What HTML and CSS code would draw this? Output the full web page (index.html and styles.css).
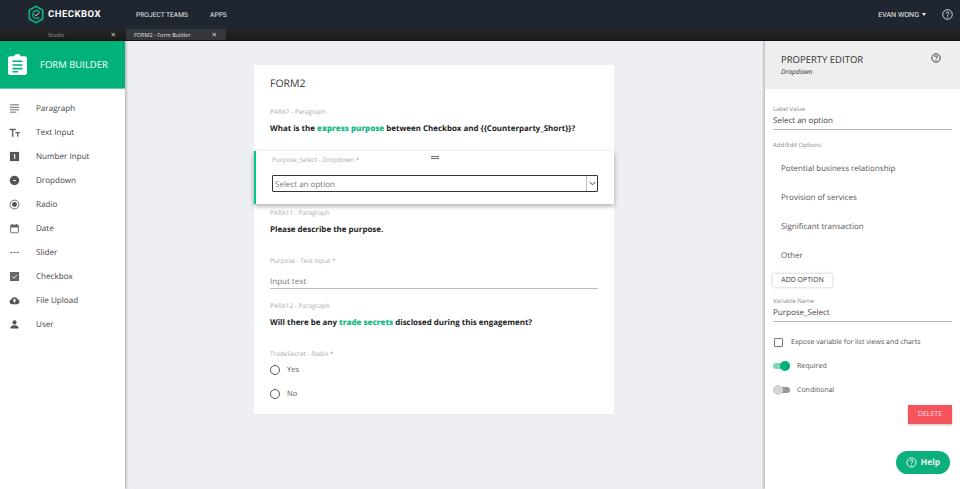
FILE: index.html
```html
<!DOCTYPE html>
<html lang="en">
<head>
<meta charset="utf-8">
<title>Checkbox Form Builder</title>
<link rel="stylesheet" href="styles.css">
</head>
<body>
<header class="topbar">
  <div class="logo">
    <svg class="logo-mark" width="16" height="19" viewBox="0 0 16 19"><path d="M8 1.200 14.700 5.100V13.900L8 17.800 1.300 13.900V5.100Z" fill="none" stroke="#0fa878" stroke-width="1.800"/><path d="M11.400 6.800A3.900 3.900 0 1 0 11.400 12.200" fill="none" stroke="#0fa878" stroke-width="1.600"/><path d="M6.600 9.300 8.100 10.700 11.600 7.600" fill="none" stroke="#d8efe6" stroke-width="1"/></svg>
    <span class="logo-text">CHECKBOX</span>
  </div>
  <nav class="topnav"><span>PROJECT TEAMS</span><span>APPS</span></nav>
  <div class="user">
    <span>EVAN WONG</span><i class="caret"></i>
    <svg class="help-top" width="11" height="11" viewBox="0 0 12 12"><circle cx="6" cy="6" r="5.200" fill="none" stroke="#fff" stroke-width=".9"/><path d="M4.500 4.800A1.500 1.500 0 1 1 6.700 6.100C6.200 6.400 6 6.600 6 7.300" fill="none" stroke="#fff" stroke-width=".9"/><circle cx="6" cy="8.800" r=".6" fill="#fff"/></svg>
  </div>
</header>
<div class="tabs">
  <div class="tab"><span class="tab-name">Studio</span><span class="tab-x">✕</span></div>
  <div class="tab active"><span class="tab-name">FORM2 - Form Builder</span><span class="tab-x">✕</span></div>
</div>
<div class="workspace">
  <aside class="sidebar">
    <div class="side-head">
      <svg width="19" height="21" viewBox="0 0 19 23" preserveAspectRatio="none"><path d="M2.200 2.500H6.200C6.400.9 7.800 0 9.500 0S12.600.9 12.800 2.500H16.800C18 2.500 19 3.500 19 4.700V20.800C19 22 18 23 16.800 23H2.200C1 23 0 22 0 20.800V4.700C0 3.500 1 2.500 2.200 2.500Z" fill="#fff"/><path d="M4.500 8H14.500M4.500 12H14.500M4.500 16H14.500M4.500 19.500H10" stroke="#00b27a" stroke-width="1.700"/></svg>
      <span>FORM BUILDER</span>
    </div>
    <ul class="side-list">
      <li><svg viewBox="0 0 12 12"><path d="M1 2H11M1 4.700H11M1 7.400H11M1 10H8" stroke="#666" stroke-width="1"/></svg>Paragraph</li>
      <li><svg viewBox="0 0 12 12"><path d="M.5 2H7.500V3.500H4.800V10.500H3.200V3.500H.5ZM7 5.500H12V6.800H10.200V10.500H8.800V6.800H7Z" fill="#666"/></svg>Text Input</li>
      <li><svg viewBox="0 0 12 12"><rect x="1" y="1" width="10" height="10" fill="#555"/><path d="M5.400 3.500H6.800V8.700H5.600V4.700H4.800V4Z" fill="#fff"/></svg>Number Input</li>
      <li><svg viewBox="0 0 12 12"><circle cx="6" cy="6" r="5.200" fill="#555"/><rect x="4.500" y="5.600" width="3" height="1" fill="#fff"/></svg>Dropdown</li>
      <li><svg viewBox="0 0 12 12"><circle cx="6" cy="6" r="4.800" fill="none" stroke="#666" stroke-width="1"/><circle cx="6" cy="6" r="2.700" fill="#555"/></svg>Radio</li>
      <li><svg viewBox="0 0 12 12"><rect x="1.800" y="2.300" width="8.400" height="8.400" rx=".8" fill="none" stroke="#666" stroke-width="1"/><path d="M1.800 2.300H10.200V5H1.800ZM3.200 1H4.300V2.500H3.200ZM7.700 1H8.800V2.500H7.700Z" fill="#666"/></svg>Date</li>
      <li><svg viewBox="0 0 12 12"><path d="M1.500 6H10.500" stroke="#888" stroke-width=".5"/><circle cx="2.200" cy="6" r=".9" fill="#666"/><circle cx="6" cy="6" r=".9" fill="#666"/><circle cx="9.800" cy="6" r=".9" fill="#666"/></svg>Slider</li>
      <li><svg viewBox="0 0 12 12"><rect x="1" y="1" width="10" height="10" rx=".5" fill="#666"/><path d="M3.400 6 5.300 7.900 8.700 4.200" fill="none" stroke="#fff" stroke-width="1"/></svg>Checkbox</li>
      <li><svg viewBox="0 0 12 12"><path d="M3 10A2.700 2.700 0 0 1 2.600 4.700 3.700 3.700 0 0 1 9.400 4.700 2.700 2.700 0 0 1 9.200 10Z" fill="#555"/><path d="M6 3.800 8 6.300H6.800V8.300H5.200V6.300H4Z" fill="#fff"/></svg>File Upload</li>
      <li><svg viewBox="0 0 12 12"><circle cx="6" cy="3.700" r="2.300" fill="#555"/><path d="M1.800 10.300V9C1.800 7.500 4.500 6.900 6 6.900S10.200 7.500 10.200 9V10.300Z" fill="#555"/></svg>User</li>
    </ul>
  </aside>
  <main class="canvas">
    <section class="card">
      <h1 class="form-title">FORM2</h1>
      <div class="block para-first">
        <div class="field-label">PARA7 - Paragraph</div>
        <p class="para">What is the <b class="accent">express purpose</b> between Checkbox and {{Counterparty_Short}}?</p>
      </div>
      <div class="selected">
        <div class="sel-label">Purpose_Select - Dropdown *</div>
        <i class="handle"></i>
        <div class="select-box"><span class="select-text">Select an option</span><span class="select-arrow"><svg width="7" height="5" viewBox="0 0 7 5"><path d="M.7 1 3.500 3.800 6.300 1" fill="none" stroke="#444" stroke-width="1"/></svg></span></div>
      </div>
      <div class="block para-after">
        <div class="field-label">PARA11 - Paragraph</div>
        <p class="para">Please describe the purpose.</p>
      </div>
      <div class="block text-block">
        <div class="field-label">Purpose - Text Input *</div>
        <div class="text-input">Input text</div>
      </div>
      <div class="block para-third">
        <div class="field-label">PARA12 - Paragraph</div>
        <p class="para">Will there be any <b class="accent">trade secrets</b> disclosed during this engagement?</p>
      </div>
      <div class="block radio-block">
        <div class="field-label">TradeSecret - Radio *</div>
        <div class="radio"><i></i>Yes</div>
        <div class="radio"><i></i>No</div>
      </div>
    </section>
  </main>
  <aside class="props">
    <div class="props-head">
      <div>
        <div class="props-title">PROPERTY EDITOR</div>
        <div class="props-sub">Dropdown</div>
      </div>
      <svg width="10" height="10" viewBox="0 0 12 12"><circle cx="6" cy="6" r="5" fill="none" stroke="#222" stroke-width="1"/><path d="M4.500 4.800A1.500 1.500 0 1 1 6.700 6.100C6.200 6.400 6 6.600 6 7.300" fill="none" stroke="#222" stroke-width="1"/><circle cx="6" cy="8.800" r=".6" fill="#222"/></svg>
    </div>
    <div class="props-body">
      <div class="prop-field">
        <div class="prop-label">Label Value</div>
        <div class="prop-value">Select an option</div>
      </div>
      <div class="prop-label options-label">Add/Edit Options:</div>
      <ul class="options">
        <li>Potential business relationship</li>
        <li>Provision of services</li>
        <li>Significant transaction</li>
        <li>Other</li>
      </ul>
      <button class="add-btn">ADD OPTION</button>
      <div class="prop-field var-field">
        <div class="prop-label">Variable Name</div>
        <div class="prop-value">Purpose_Select</div>
      </div>
      <div class="check-row"><i class="box"></i>Expose variable for list views and charts</div>
      <div class="toggle-row"><i class="toggle on"></i>Required</div>
      <div class="toggle-row"><i class="toggle"></i>Conditional</div>
      <div class="delete-row"><button class="delete">DELETE</button></div>
    </div>
    <button class="help-btn"><svg width="11" height="11" viewBox="0 0 12 12"><circle cx="6" cy="6" r="5" fill="none" stroke="#fff" stroke-width="1"/><path d="M4.500 4.800A1.500 1.500 0 1 1 6.700 6.100C6.200 6.400 6 6.600 6 7.300" fill="none" stroke="#fff" stroke-width="1"/><circle cx="6" cy="8.800" r=".6" fill="#fff"/></svg>Help</button>
  </aside>
</div>
</body>
</html>
```
FILE: styles.css
```css
* { box-sizing: border-box; }
html, body { margin: 0; height: 100%; overflow: hidden; }
body { font-family: "Open Sans", sans-serif; color: #333; background: #eeeef5; display: flex; flex-direction: column; text-rendering: geometricPrecision; }
ul { list-style: none; margin: 0; padding: 0; }
h1, p { margin: 0; font-weight: normal; }
i { display: block; }
button { font-family: inherit; border: 0; padding: 0; text-rendering: geometricPrecision; }

.topbar { height: 29px; flex: none; background: #20262f; color: #fff; display: flex; align-items: center; padding: 0 7px 0 28px; }
.logo { display: flex; align-items: center; gap: 4px; width: 108px; }
.logo-text { font: 700 9.500px "Roboto", sans-serif; letter-spacing: .5px; }
.topnav { display: flex; gap: 22px; font: 400 6.700px "Roboto", sans-serif; color: #e8e8e8; }
.user { margin-left: auto; display: flex; align-items: center; font: 400 7.100px "Roboto", sans-serif; color: #eee; }
.caret { margin-left: 3px; border: 2.500px solid transparent; border-top: 3px solid #eee; border-bottom: 0; }
.help-top { margin-left: 16px; }

.tabs { height: 12px; flex: none; display: flex; background: linear-gradient(#262626, #1c1c1c); border-bottom: 1px solid #111; }
.tab { width: 126px; display: flex; align-items: center; font-size: 5.500px; color: #999; padding: 0 10px 0 48px; }
.tab.active { width: 100px; background: #34373d; color: #e0e0e0; padding: 0 9px 0 8px; }
.tab-name { flex: 1; white-space: nowrap; }
.tab-x { font-size: 6.500px; color: #ddd; }

.workspace { flex: 1; min-height: 0; display: flex; position: relative; }

.sidebar { width: 125px; flex: none; background: #fff; box-shadow: 1px 0 3px rgba(0,0,0,.3); }
.side-head { height: 48px; background: #00b27a; border-bottom: 1px solid #5ed0aa; display: flex; align-items: center; gap: 13px; padding-left: 8px; color: #fff; font-size: 9.500px; }
.side-list { padding-top: 7px; }
.side-list li { height: 24px; display: flex; align-items: center; gap: 16px; padding-left: 9px; font-size: 8.100px; color: #444; }
.side-list svg { width: 11px; height: 11px; flex: none; }

.canvas { flex: 1; min-width: 0; padding: 24px 151px 0 129px; }
.card { width: 360px; height: 349px; background: #fff; display: flex; flex-direction: column; }
.form-title { font-size: 10.500px; color: #333; padding: 13px 16px 0; line-height: 13px; }
.block { padding: 0 16px; }
.field-label { font-size: 6.400px; color: #aaa; line-height: 9px; }
.para { font-size: 7.950px; font-weight: 700; color: #222; line-height: 12px; margin-top: 7px; white-space: nowrap; }
.accent { color: #12b886; }
.para-first { margin-top: 16px; }
.selected { position: relative; margin-top: 16px; height: 53px; background: #fff; border-left: 2px solid #00c78a; box-shadow: 0 2px 5px rgba(0,0,0,.35); padding: 4px 16px 0 16px; }
.sel-label { font-size: 6.400px; color: #aaa; line-height: 9px; }
.handle { position: absolute; left: 175px; top: 5px; width: 8px; height: 3px; border-top: 1px solid #666; border-bottom: 1px solid #666; }
.select-box { margin-top: 11px; height: 17px; border: 1px solid #333; border-radius: 1px; display: flex; align-items: center; font-size: 8px; color: #777; padding-left: 2px; justify-content: space-between; }
.select-text { padding-top: 1px; }
.select-arrow { width: 11px; height: 100%; border-left: 1px solid #bbb; display: flex; align-items: center; justify-content: center; }
.para-after { margin-top: 4px; }
.text-block { margin-top: 20px; }
.text-input { margin-top: 8px; height: 16px; padding-top: 3px; border-bottom: 1px solid #bbb; font-size: 8px; color: #777; line-height: 12px; }
.para-third { margin-top: 12px; }
.radio-block { margin-top: 20px; }
.radio { height: 24px; display: flex; align-items: center; gap: 7px; font-size: 7.500px; color: #555; }
.radio i { width: 10px; height: 10px; border: 1px solid #555; border-radius: 50%; }

.props { width: 195px; flex: none; background: #fff; box-shadow: -1px 0 3px rgba(0,0,0,.3); position: relative; }
.props-head { height: 48px; background: #eee; display: flex; justify-content: space-between; padding: 12px 19px 0 16px; }
.props-title { font-size: 9.500px; color: #333; line-height: 13px; }
.props-sub { font-size: 6.800px; font-style: italic; color: #333; line-height: 10px; margin-top: 1px; }
.props-body { padding: 16px 8px 0; }
.prop-label { font-size: 6px; color: #888; line-height: 8px; }
.prop-value { font-size: 8px; color: #444; line-height: 12px; margin-top: 2px; padding-bottom: 2px; border-bottom: 1px solid #bbb; }
.options-label { margin-top: 11px; }
.options { margin-top: 5px; }
.options li { height: 29px; display: flex; align-items: center; padding-left: 8px; font-size: 8px; color: #555; }
.add-btn { margin-top: 4px; display: block; width: 59px; height: 13px; background: #fff; box-shadow: 0 0 3px rgba(0,0,0,.25); font-size: 7px; color: #333; }
.var-field { margin-top: 10px; }
.check-row { display: flex; align-items: center; gap: 8px; font-size: 7px; color: #555; margin-top: 13px; height: 14px; }
.box { width: 9px; height: 9px; border: 1px solid #777; border-radius: 1px; margin-left: 1px; }
.toggle-row { display: flex; align-items: center; gap: 7px; font-size: 7px; color: #555; margin-top: 10px; height: 14px; }
.toggle { width: 17px; height: 6px; border-radius: 3px; background: #999; position: relative; }
.toggle::after { content: ""; position: absolute; left: 0; top: -2px; width: 10px; height: 10px; border-radius: 50%; background: #d4d6d0; }
.toggle.on { background: #7fd8bd; }
.toggle.on::after { left: 7px; background: #00b27a; }
.delete-row { display: flex; justify-content: flex-end; margin-top: 8px; }
.delete { width: 44px; height: 19px; background: #f5555a; color: #fde; font-size: 7px; box-shadow: 0 1px 2px rgba(0,0,0,.25); }
.help-btn { position: absolute; right: 10px; bottom: 15px; width: 54px; height: 23px; border-radius: 12px; background: #0cb07f; color: #eee; display: flex; align-items: center; justify-content: center; gap: 4px; font-size: 8.500px; font-weight: 700; }
```
